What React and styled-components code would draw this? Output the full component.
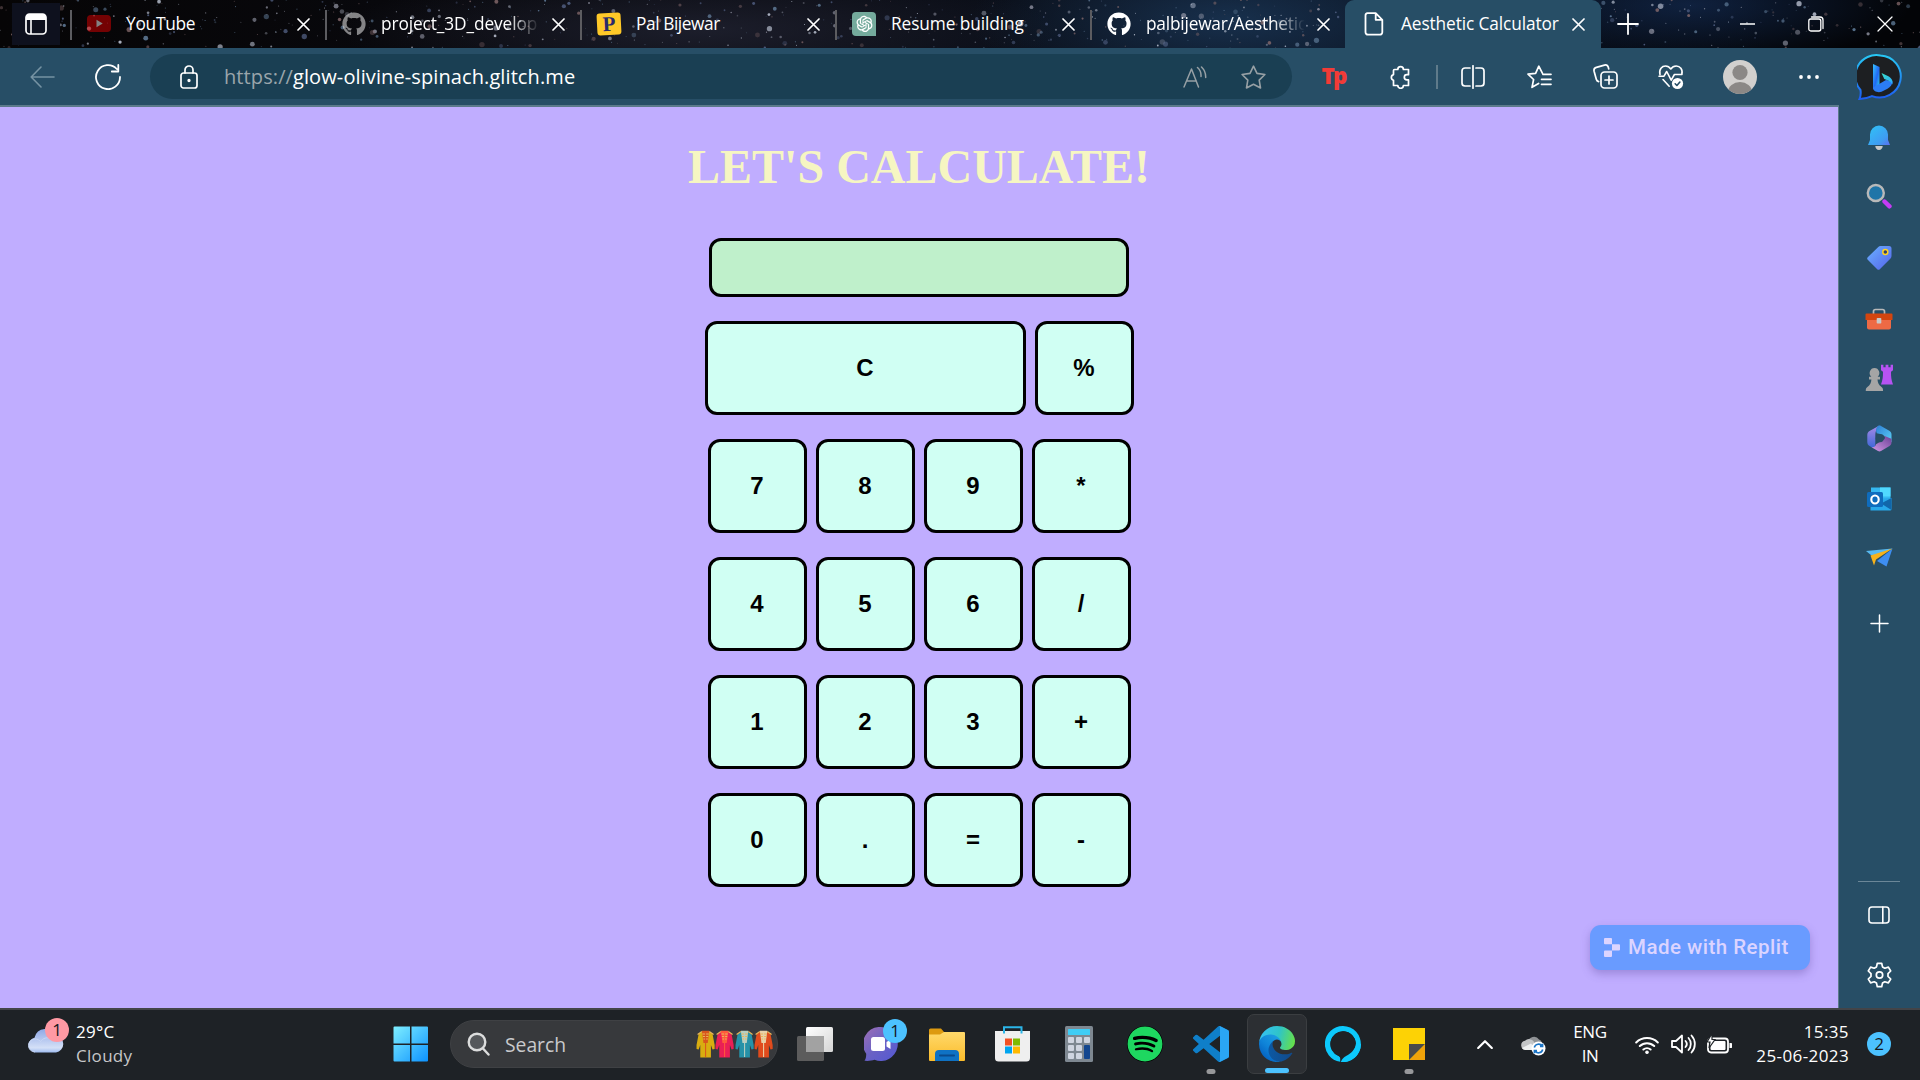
import React from 'react';
import styled, { createGlobalStyle } from 'styled-components';
import { FaGithub, FaSpotify } from 'react-icons/fa';
import { AiOutlineOpenAI } from 'react-icons/ai';

const GlobalStyle = createGlobalStyle`
  * { box-sizing: border-box; }
  html, body { margin: 0; padding: 0; background: #1d2125; }
  body { overflow: hidden; }
  svg { display: block; flex: none; }
`;

const ui = `"Open Sans", "Noto Sans", sans-serif`;

const Desktop = styled.div`
  width: 1920px;
  height: 1080px;
  display: flex;
  flex-direction: column;
  overflow: hidden;
  font-family: ${ui};
  color: #fff;
  white-space: nowrap;
`;

/* ---------- tab strip ---------- */
const TabStrip = styled.header`
  position: relative;
  height: 48px;
  flex: none;
  display: flex;
  background:
    radial-gradient(ellipse 260px 80px at 1230px 20px, rgba(28, 58, 92, 0.75), transparent),
    radial-gradient(ellipse 220px 60px at 1690px 5px, rgba(20, 44, 84, 0.7), transparent),
    radial-gradient(ellipse 360px 60px at 700px 30px, rgba(30, 32, 46, 0.9), transparent),
    linear-gradient(90deg, #060506, #0a0b12 40%, #0a1220 70%, #030407 92%);
`;
const Sky = styled.svg`
  position: absolute;
  inset: 0;
`;
const WorkspaceButton = styled.div`
  position: relative;
  width: 48px;
  height: 42px;
  margin: 3px 10px 0 12px;
  background: #0e111e;
  display: flex;
  align-items: center;
  justify-content: center;
`;
const Tab = styled.div`
  position: relative;
  width: ${(p) => (p.$active ? 256 : 255)}px;
  height: 48px;
  display: flex;
  align-items: center;
  padding: 0 0 1px 17px;
  background: ${(p) => (p.$active ? '#274e66' : 'transparent')};
  border-radius: 9px 9px 0 0;
`;
const Divider = styled.span`
  position: absolute;
  left: 0;
  top: 10px;
  width: 2px;
  height: 30px;
  background: #5c5c60;
`;
const TabIcon = styled.span`
  width: 24px;
  height: 24px;
  margin-right: 15px;
  display: flex;
  align-items: center;
  justify-content: center;
  opacity: ${(p) => (p.$dim ? 0.5 : 1)};
`;
const TabTitle = styled.span`
  width: 162px;
  font-size: 17.3px;
  line-height: 24px;
  letter-spacing: ${(p) => p.$track || 0}px;
  mask-image: ${(p) => (p.$fade ? 'linear-gradient(90deg, #000 78%, transparent 98%)' : 'none')};
`;
const TabClose = styled.span`
  width: 26px;
  margin-left: 2px;
  padding-top: 2px;
  display: flex;
  justify-content: center;
`;
const Slot = styled.span`
  position: relative;
  flex: none;
  width: ${(p) => p.$w}px;
  padding-left: ${(p) => p.$lead || 0}px;
  padding-top: ${(p) => p.$drop || 0}px;
  display: flex;
  align-items: center;
  justify-content: center;
`;
const WindowButtons = styled.div`
  position: relative;
  display: flex;
  padding: 0 0 1px 1px;
`;

/* ---------- toolbar ---------- */
const Toolbar = styled.nav`
  height: 57px;
  flex: none;
  display: flex;
  align-items: center;
  padding: 0 1px 0 9px;
  background: #274e66;
`;
const AddressBar = styled.div`
  width: 1142px;
  height: 45px;
  margin: 0 9px;
  padding: 0 9px 0 30px;
  display: flex;
  align-items: center;
  border-radius: 23px;
  background: #1a3f53;
`;
const Url = styled.span`
  flex: 1;
  margin-left: 26px;
  font-size: 20px;
  line-height: 28px;
  letter-spacing: 0.1px;
  color: #fff;
`;
const Muted = styled.span`
  color: #9aa5ab;
`;
const ToolDivider = styled.span`
  width: 2px;
  height: 24px;
  margin: 0 2px 0 3px;
  background: #5f7b8b;
`;
const TpMark = styled.span`
  font-family: "Open Sans", sans-serif;
  font-weight: 800;
  font-size: 22.5px;
  line-height: 24px;
  letter-spacing: -2px;
  padding-bottom: 2px;
  color: #f23b37;
`;

/* ---------- middle ---------- */
const Middle = styled.div`
  height: 903px;
  flex: none;
  display: flex;
`;
const Page = styled.main`
  position: relative;
  width: 1839px;
  border-top: 2px solid #5c7a8b;
  border-right: 1px solid #5c7a8b;
  background: #c0adff;
  display: flex;
  flex-direction: column;
  align-items: center;
  padding-top: 32px;
`;
const Title = styled.h1`
  margin: 0;
  height: 56px;
  font: bold 48px/56px "Liberation Serif", "Times New Roman", serif;
  color: #f6f6c2;
`;
const Display = styled.div`
  width: 420px;
  height: 59px;
  margin-top: 43px;
  border: 3px solid #000;
  border-radius: 12px;
  background: #bff0cb;
`;
const KeyRow = styled.div`
  display: flex;
  gap: 9px;
  margin-top: 24px;
`;
const Key = styled.button`
  width: ${(p) => (p.$wide ? 321 : 99)}px;
  height: 94px;
  padding: 0 0 1px;
  border: 3px solid #000;
  border-radius: 12px;
  background: #d0fff3;
  color: #000;
  font: bold 24px/28px "Liberation Sans", Arial, sans-serif;
`;
const ReplitBadge = styled.div`
  position: absolute;
  right: 28px;
  bottom: 38px;
  width: 220px;
  height: 45px;
  display: flex;
  align-items: center;
  padding: 0 0 1px 14px;
  gap: 8px;
  border-radius: 11px;
  background: #699bff;
  color: #dcd4ff;
  box-shadow: 0 4px 8px rgba(90, 70, 150, 0.35);
  font: 500 20.5px/24px Roboto, "Open Sans", sans-serif;
  letter-spacing: 0.48px;
`;
const Sidebar = styled.aside`
  width: 81px;
  padding-right: 1px;
  background: #274e66;
  display: flex;
  flex-direction: column;
  align-items: center;
`;
const SideItem = styled.span`
  height: ${(p) => p.$h}px;
  display: flex;
  align-items: center;
  justify-content: center;
`;
const SideRule = styled.span`
  width: 42px;
  height: 1px;
  margin-top: 216px;
  background: #6b8798;
`;

/* ---------- taskbar ---------- */
const Taskbar = styled.footer`
  height: 72px;
  flex: none;
  display: flex;
  align-items: center;
  padding-bottom: 2px;
  border-top: 2px solid #434448;
  background: #1e2226;
`;
const Weather = styled.div`
  width: 378px;
  padding-left: 27px;
  display: flex;
  align-items: center;
  gap: 11px;
`;
const WeatherArt = styled.span`
  position: relative;
  width: 38px;
  height: 52px;
  padding-top: 6px;
`;
const Bubble = styled.span`
  position: absolute;
  right: ${(p) => p.$right}px;
  top: ${(p) => p.$top}px;
  width: 24px;
  height: 24px;
  border-radius: 50%;
  background: ${(p) => p.$bg};
  color: #16181b;
  font-size: 17px;
  line-height: 23px;
  text-align: center;
`;
const Lines = styled.div`
  width: ${(p) => (p.$w ? p.$w + 'px' : 'auto')};
  display: flex;
  flex-direction: column;
  text-align: ${(p) => p.$align || 'left'};
  font-size: 17px;
  line-height: 24px;
  letter-spacing: ${(p) => p.$track || 0}px;
`;
const Soft = styled.span`
  color: #c6c7c9;
`;
const SearchBox = styled.div`
  width: 328px;
  height: 48px;
  margin: 0 4px 0 6px;
  padding: 0 4px 0 16px;
  display: flex;
  align-items: center;
  border: 1px solid #3f4144;
  border-radius: 24px;
  background: #37393c;
`;
const SearchText = styled.span`
  flex: 1;
  margin-left: 15px;
  padding-top: 1px;
  font-size: 19.3px;
  line-height: 26px;
  color: #c9cacc;
`;
const Active = styled.span`
  position: relative;
  width: 60px;
  height: 60px;
  display: flex;
  align-items: center;
  justify-content: center;
  border: 1px solid #3b3e41;
  border-radius: 7px;
  background: #2c2f33;
`;
const Running = styled.i`
  position: absolute;
  left: 50%;
  bottom: ${(p) => (p.$on ? 0 : -12)}px;
  width: ${(p) => (p.$on ? 24 : 9)}px;
  height: 5px;
  transform: translateX(-50%);
  border-radius: 3px;
  background: ${(p) => (p.$on ? '#4cc2ff' : '#97989a')};
`;
const AppSlot = styled(Slot)`
  height: 36px;
`;
const Tray = styled.div`
  margin-left: 35px;
  display: flex;
  align-items: center;
`;
const Count = styled.span`
  width: 24px;
  height: 24px;
  margin-left: 18px;
  border-radius: 50%;
  background: #4cc2ff;
  color: #16181b;
  font-size: 17px;
  line-height: 23px;
  text-align: center;
`;

/* ---------- icon helpers ---------- */
const Line = ({ w = 24, h = w, box = `0 0 ${w} ${h}`, sw = 1.6, color = '#fff', children }) => (
  <svg width={w} height={h} viewBox={box} fill="none" stroke={color} strokeWidth={sw} strokeLinecap="round" strokeLinejoin="round">
    {children}
  </svg>
);
const Cross = ({ s = 13, sw = 1.7 }) => (
  <Line w={s} sw={sw}><path d={`M1 1L${s - 1} ${s - 1}M${s - 1} 1L1 ${s - 1}`} /></Line>
);

const stars = (() => {
  let seed = 20;
  const rnd = () => {
    seed = (seed * 16807) % 2147483647;
    return seed / 2147483647;
  };
  const tints = ['#9a9cab', '#64809e', '#866a6c', '#c4cbdb', '#56658a'];
  return Array.from({ length: 700 }, () => ({
    x: rnd() * 1920,
    y: rnd() * 48,
    r: 0.5 + rnd() ** 4 * 2.3,
    o: 0.3 + rnd() * 0.55,
    c: tints[Math.floor(rnd() * tints.length)],
  }));
})();

const YouTube = () => (
  <svg width="24" height="17" viewBox="0 0 24 17">
    <rect width="24" height="17" rx="4" fill="#e00000" />
    <path d="M9.5 4.8v7.4l6.2-3.7z" fill="#fff" />
  </svg>
);
const PMark = styled.span`
  width: 24px;
  height: 22px;
  border-radius: 3px;
  transform: rotate(-3deg);
  background: #ffc928;
  color: #2b2a6b;
  font: bold 21px/22px "Liberation Serif", serif;
  text-align: center;
`;
const GptMark = styled.span`
  width: 24px;
  height: 24px;
  border-radius: 4px 4px 0 4px;
  background: #74aa9c;
  display: flex;
  align-items: center;
  justify-content: center;
`;
const FileIcon = () => (
  <Line w={20} h={24} sw={1.8}>
    <path d="M3.5 1.2h8.2l6.6 6.6v12.5a2.4 2.4 0 0 1-2.4 2.4H3.9a2.4 2.4 0 0 1-2.4-2.4V3.4a2.2 2.2 0 0 1 2-2.2zM11.7 1.2v6.6h6.6" />
  </Line>
);

const TABS = [
  { title: 'YouTube', icon: <YouTube />, dim: true, track: -0.25 },
  { title: 'project_3D_develop', icon: <FaGithub size={24} />, dim: true, fade: true, track: -0.1 },
  { title: 'Pal Bijewar', icon: <PMark>P</PMark>, track: -0.42 },
  { title: 'Resume building', icon: <GptMark><AiOutlineOpenAI size={21} /></GptMark>, track: -0.1 },
  { title: 'palbijewar/Aesthetic', icon: <FaGithub size={24} />, fade: true, track: -0.2 },
  { title: 'Aesthetic Calculator', icon: <FileIcon />, active: true, track: -0.11 },
];

const Bing = () => (
  <svg width="46" height="48" viewBox="0 0 46 48">
    <defs>
      <linearGradient id="bo" x1="0" y1="0" x2="0" y2="1"><stop offset="0" stopColor="#27c8f5" /><stop offset="1" stopColor="#1d5cf0" /></linearGradient>
      <linearGradient id="bb" x1="0" y1="0" x2="1" y2="1"><stop offset="0" stopColor="#35c3ff" /><stop offset=".55" stopColor="#2268f2" /><stop offset="1" stopColor="#2ad3ee" /></linearGradient>
      <linearGradient id="bc" x1="0" y1="0" x2="1" y2="1"><stop offset="0" stopColor="#38e0c8" /><stop offset="1" stopColor="#2aa8ff" /></linearGradient>
    </defs>
    <path d="M23.500 1.500a21.200 21 0 1 1-8.500 40.600c-3.500 1.600-8 2.900-12.500 2.900 1.200-2.500 1.500-5.500 1-9A21.200 21 0 0 1 23.500 1.500z" fill="#1d1f22" stroke="url(#bo)" strokeWidth="2" />
    <path d="M16 10l6.500 3v18l-6.500 4.500z" fill="url(#bb)" />
    <path d="M16 33.500l13-7.500 6.500 1.500c-.3 3.200-2 5.600-5 7.200l-6 3c-4 1.500-8.500-.6-8.500-4.200z" fill="#2b7cf5" />
    <path d="M24.500 19l6.300 2.900c4 2 5.600 5.400 4.500 8.600-1-2.500-2.600-3.500-4.800-4.300l-3.200-1.300z" fill="url(#bc)" />
  </svg>
);

const Toolbelt = () => (
  <>
    <Slot $w={65}><TpMark>Tp</TpMark></Slot>
    <Slot $w={67} $lead={2}>
      <Line w={24} sw={1.7}><path d="M5.500 4.500h3.300a2.800 2.800 0 0 1 5.600 0h5.100v5.200h-1.600a2.600 2.600 0 0 0 0 5.200h1.600v5.600h-5.100a2.800 2.800 0 0 1-5.600 0H4.500v-5.300a2.900 2.900 0 0 1 0-5.600V5.500a1 1 0 0 1 1-1z" /></Line>
    </Slot>
    <ToolDivider />
    <Slot $w={66}>
      <Line w={24} sw={1.7}><path d="M12 .8v22.400M9 3H4a3 3 0 0 0-3 3v12a3 3 0 0 0 3 3h5M15 3h5a3 3 0 0 1 3 3v12a3 3 0 0 1-3 3h-5" /></Line>
    </Slot>
    <Slot $w={66}>
      <Line w={25} h={24} sw={1.7}><path d="M15.500 8.300L11.800 1.200 8.600 8.300 1 9.200l5.600 5.300L5 22.300l6.600-3.900M15.800 9.300h8.200M14.500 14.300h9.500M14.500 19.300h9.500" /></Line>
    </Slot>
    <Slot $w={66}>
      <Line w={25} sw={1.7}><rect x="8" y="8" width="16" height="16" rx="3.500" /><path d="M16 12v8M12 16h8M5.600 17.600a3.200 3.200 0 0 1-2.300-2.300L1.100 7.200a3.200 3.200 0 0 1 2.300-3.800L11.500 1.100a3.200 3.200 0 0 1 3.800 2.200l.4 1.600" /></Line>
    </Slot>
    <Slot $w={66}>
      <Line w={26} sw={1.6}>
        <path d="M2 10.500C.6 5 4.200 2 7.500 2c2.600 0 4.300 1.500 5.300 3 1-1.500 2.800-3 5.400-3 3.600 0 7 3.300 5.600 8.500M1 12.200h5l2.700-4.700 4.500 8.700 3.200-5.700h7.600M5 15.500l6.200 6.700" />
        <circle cx="19.500" cy="19.500" r="5.600" fill="#fff" stroke="none" /><path d="M17.200 19.800l1.700 1.700 3-3.500" stroke="#274e66" />
      </Line>
    </Slot>
    <Slot $w={72}>
      <svg width="34" height="34" viewBox="0 0 34 34">
        <defs><clipPath id="av"><circle cx="17" cy="17" r="17" /></clipPath></defs>
        <g clipPath="url(#av)"><rect width="34" height="34" fill="#d2d0ce" /><circle cx="17" cy="12.500" r="7.600" fill="#8b8886" /><ellipse cx="17" cy="32" rx="12" ry="10" fill="#8b8886" /></g>
      </svg>
    </Slot>
    <Slot $w={66}>
      <svg width="22" height="6" viewBox="0 0 22 6" fill="#fff"><circle cx="3" cy="3" r="1.900" /><circle cx="11" cy="3" r="1.900" /><circle cx="19" cy="3" r="1.900" /></svg>
    </Slot>
    <Slot $w={76} $drop={2}><Bing /></Slot>
  </>
);

const SideIcons = () => (
  <>
    <SideItem $h={66}>
      <svg width="22" height="26" viewBox="0 0 22 26">
        <defs><linearGradient id="bl" x1="0" y1="0" x2="1" y2="1"><stop offset="0" stopColor="#2fc4f6" /><stop offset=".7" stopColor="#3e9df3" /><stop offset="1" stopColor="#5d6ef0" /></linearGradient></defs>
        <path d="M7.300 21h7.400c0 2-1.500 4-3.700 4s-3.700-2-3.700-4z" fill="#c9c9c9" />
        <path d="M2 9.500a9 9 0 0 1 18 0V15l2 5H0l2-5z" fill="url(#bl)" />
      </svg>
    </SideItem>
    <SideItem $h={50}>
      <svg width="26" height="26" viewBox="0 0 26 26">
        <path d="M18.500 18.500l5 4.800" stroke="#c63bf5" strokeWidth="4.400" strokeLinecap="round" />
        <circle cx="9.800" cy="10" r="8" fill="#1f75a8" stroke="#b9b9b9" strokeWidth="2.400" />
      </svg>
    </SideItem>
    <SideItem $h={72}>
      <svg width="25" height="25" viewBox="0 0 25 25">
        <defs><linearGradient id="tg" x1="0" y1="0" x2="1" y2="1"><stop offset="0" stopColor="#6ab1ff" /><stop offset="1" stopColor="#5563ea" /></linearGradient></defs>
        <path d="M13.500 1H22a2.500 2.500 0 0 1 2.500 2.500V11c0 1-.3 1.700-1 2.400L13 23.900a2 2 0 0 1-3 0L1 15a2 2 0 0 1 0-3L11.300 1.900c.6-.6 1.300-.9 2.200-.9z" fill="url(#tg)" />
        <circle cx="18.300" cy="7" r="2.500" fill="#32406b" stroke="#ffd21f" strokeWidth="1.500" />
      </svg>
    </SideItem>
    <SideItem $h={52}>
      <svg width="28" height="22" viewBox="0 0 28 22">
        <path d="M8.500 6V3.500a2 2 0 0 1 2-2h7a2 2 0 0 1 2 2V6" fill="none" stroke="#b9b9b9" strokeWidth="1.700" />
        <rect x="2" y="8" width="24" height="13.500" rx="2" fill="#ee6a45" />
        <path d="M.5 6.500a1 1 0 0 1 1-1h25a1 1 0 0 1 1 1V12h-27z" fill="#d3450f" />
        <rect x="11.700" y="10" width="4.600" height="5.600" rx=".8" fill="#c9c9c9" />
      </svg>
    </SideItem>
    <SideItem $h={66}>
      <svg width="28" height="28" viewBox="0 0 28 28">
        <path d="M16 .8h2.400v2.500h2.200V.8h2.800v2.500h2.200V.8H28v5.400l-2 1.600c0 5 .3 8 2 12.700H16c1.700-4.700 2-7.700 2-12.700l-2-1.600z" fill="#b653f2" />
        <path d="M9.500 4a5 5 0 0 1 3.200 8.700H15v2.800h-2.500c.2 3.500 1.300 5.500 4 7.500 1.200.8 1.700 2 1.500 4H.8c-.2-2 .4-3.200 1.600-4 2.700-2 3.800-4 4-7.500H4v-2.800h2.300A5 5 0 0 1 9.500 4z" fill="#a5a5a5" />
      </svg>
    </SideItem>
    <SideItem $h={54}>
      <svg width="25" height="27" viewBox="0 0 25 27">
        <defs>
          <linearGradient id="m1" x1="0" y1="0" x2="1" y2="1"><stop offset="0" stopColor="#2d7fd6" /><stop offset="1" stopColor="#5cd0f5" /></linearGradient>
          <linearGradient id="m2" x1="0" y1="0" x2="0" y2="1"><stop offset="0" stopColor="#a98ae6" /><stop offset="1" stopColor="#3f67d8" /></linearGradient>
          <linearGradient id="m3" x1="0" y1="1" x2="1" y2="0"><stop offset="0" stopColor="#d49be6" /><stop offset="1" stopColor="#6a3f96" /></linearGradient>
        </defs>
        <path d="M12.500.5L2.500 6C1 7 .3 8.200.3 10v7c0 2 .8 3 2.200 4l3 1.700c1.500.5 2.800-.2 2.800-2V10c0-3 1-6.500 4.200-9.500z" fill="url(#m2)" />
        <path d="M11 1c1-.6 2-.6 3 0l8.300 4.800c1.400.8 2.200 2 2.200 3.700v7.800L15.500 9.500 9.700 8.300C8.500 5 9 2.500 11 1z" fill="url(#m1)" />
        <path d="M24.500 15v2.500c0 1.600-.7 2.700-2 3.500L14 26c-1 .6-2 .6-3 0l-6.500-3.800c2.500.3 4-.7 4.500-3l8-4.700c1.300-1 1.300-2.500 0-3.800l5.500 2.300c1.300.4 2 1 2 2z" fill="url(#m3)" />
        <circle cx="12.800" cy="13.200" r="4" fill="#274e66" />
      </svg>
    </SideItem>
    <SideItem $h={68}>
      <svg width="25" height="24" viewBox="0 0 25 24">
        <path d="M4 .5h19.500v12H4z" fill="#35b8f1" /><path d="M13 .5h10.500v9H13z" fill="#50d9ff" />
        <path d="M3.500 12l21-1v11a1.500 1.500 0 0 1-1.500 1.500H3.500z" fill="#28a8ea" /><path d="M24.500 11v12L14 16.500z" fill="#1166aa" />
        <rect x="0" y="5" width="16" height="15" rx="1.500" fill="#0f6cbd" />
        <ellipse cx="8" cy="12.500" rx="3.700" ry="4" fill="none" stroke="#fff" strokeWidth="2.100" />
      </svg>
    </SideItem>
    <SideItem $h={48}>
      <svg width="27" height="19" viewBox="0 0 27 19">
        <path d="M0 3L26.500.5 8 9.500z" fill="#58b9f0" /><path d="M26.500.5L20.500 18.500 11 13z" fill="#3e8ef2" />
        <path d="M4.500 7.500L26.500.5 10 11.500 8 17.500z" fill="#f6b21b" />
      </svg>
    </SideItem>
    <SideItem $h={84}>
      <Line w={19} sw={1.500}><path d="M9.500 1v17M1 9.500h17" /></Line>
    </SideItem>
    <SideRule />
    <SideItem $h={66}>
      <Line w={22} h={18} sw={1.600}><rect x="1" y="1" width="20" height="16" rx="3" /><path d="M14.800 1v16" /></Line>
    </SideItem>
    <SideItem $h={54}>
      <Line w={25} h={26} sw={1.700}>
        <circle cx="12.500" cy="13" r="3.200" />
        <path d="M10.300 1.300h4.400l.8 3.600 2.300 1.300 3.600-1.100 2.300 3.900-2.700 2.600v2.800l2.700 2.600-2.300 3.900-3.600-1.100-2.300 1.300-.8 3.600h-4.400l-.8-3.600-2.300-1.300-3.600 1.100L1.300 17l2.700-2.600v-2.800L1.300 9l2.300-3.900 3.600 1.100 2.300-1.300z" />
      </Line>
    </SideItem>
  </>
);

const Coat = ({ c, trim }) => (
  <svg width="19.2" height="28" viewBox="0 0 18 28" preserveAspectRatio="none">
    <path d="M5 2L2.500 4 .5 15v4l2 .5L4 15v12.500h10V15l1.500 4.500 2-.5v-4L15.500 4 13 2z" fill={c} />
    <path d="M5.500.8h7L11 13H7z" fill={trim} />
    <path d="M1.500 4.500l4-3M16.500 4.500l-4-3M6 4h6M6.500 6.500h5M7 9h4" stroke="#e9b65a" strokeWidth="1.100" />
    <path d="M9 3v24" stroke={trim} strokeWidth="1" />
  </svg>
);
const Coats = () => (
  <Slot $w={77}>
    <Coat c="#d9ad10" trim="#d9571c" /><Coat c="#ea1f55" trim="#ff5a3c" /><Coat c="#2592a8" trim="#b9cfc0" /><Coat c="#e04b1c" trim="#e8d2a8" />
  </Slot>
);

const Start = () => (
  <svg width="36" height="36" viewBox="0 0 36 36">
    <defs><linearGradient id="st" gradientUnits="userSpaceOnUse" x1="0" y1="0" x2="36" y2="36"><stop offset="0" stopColor="#80f0ff" /><stop offset="1" stopColor="#0a90ff" /></linearGradient></defs>
    <path fill="url(#st)" d="M1.500.5H17v17H.5v-16a1 1 0 0 1 1-1zM18.500.5H34a1 1 0 0 1 1 1v16H18.500zM.5 19H17v16.500H1.500a1 1 0 0 1-1-1zM18.500 19H35v15.500a1 1 0 0 1-1 1H18.500z" />
  </svg>
);
const TaskView = () => (
  <svg width="36" height="34" viewBox="0 0 36 34">
    <defs><linearGradient id="tv" x1="0" y1="0" x2="1" y2="1"><stop offset="0" stopColor="#fff" /><stop offset="1" stopColor="#d5d5d5" /></linearGradient></defs>
    <rect x="9" y="0" width="27" height="25" rx="1.500" fill="url(#tv)" />
    <rect x="0" y="9" width="27" height="25" rx="1.500" fill="#5c5c5c" />
    <path d="M9 9h18v16H9z" fill="#a2a2a2" />
  </svg>
);
const Chat = () => (
  <svg width="34" height="34" viewBox="0 0 34 34">
    <defs><linearGradient id="ch" x1="0" y1="0" x2="1" y2="1"><stop offset="0" stopColor="#a06fb4" /><stop offset=".5" stopColor="#6a62c4" /><stop offset="1" stopColor="#5358d4" /></linearGradient></defs>
    <path d="M17 0a17 17 0 1 1-6.500 32.800C8 33.700 4 34.200.5 33.800c1.300-2 1.800-4.300 1.700-7A17 17 0 0 1 17 0z" fill="url(#ch)" />
    <rect x="7" y="10" width="14" height="14" rx="2.500" fill="#fff" /><path d="M22.500 15l4-2.500v9.500l-4-2.500z" fill="#fff" />
  </svg>
);
const Folder = () => (
  <svg width="36" height="33" viewBox="0 0 36 33">
    <defs><linearGradient id="fo" x1="0" y1="0" x2="0" y2="1"><stop offset="0" stopColor="#ffd96b" /><stop offset="1" stopColor="#fbbc2b" /></linearGradient></defs>
    <path d="M0 2a1.500 1.500 0 0 1 1.500-1.500H12L15 4h20v6H0z" fill="#dd9a10" />
    <path d="M0 6.500h11l4-2.500h20a1 1 0 0 1 1 1v27a1 1 0 0 1-1 1H1a1 1 0 0 1-1-1z" fill="url(#fo)" />
    <path d="M6 33v-7a4 4 0 0 1 4-4h16a4 4 0 0 1 4 4v7z" fill="#0f72c4" /><path d="M11 27.500h14" stroke="#0a4a8c" strokeWidth="2" strokeLinecap="round" />
  </svg>
);
const Store = () => (
  <svg width="36" height="36" viewBox="0 0 36 36">
    <path d="M0 5h35v27a3.500 3.500 0 0 1-3.500 3.500h-28A3.500 3.500 0 0 1 0 32z" fill="#efefef" />
    <path d="M9 7.500V1.200h17.500v6.300" fill="none" stroke="#2bb5e8" strokeWidth="2" />
    <path d="M10 12.500h7v7h-7z" fill="#f25022" /><path d="M18 12.500h7v7h-7z" fill="#7fba00" /><path d="M10 20.500h7v7h-7z" fill="#00a4ef" /><path d="M18 20.500h7v7h-7z" fill="#ffb900" />
  </svg>
);
const Calc = () => (
  <svg width="28" height="36" viewBox="0 0 28 36">
    <rect width="28" height="36" rx="1.500" fill="#7e8891" /><rect x="3" y="3" width="22" height="6" rx=".5" fill="#3fcdf5" />
    {[3, 11, 19].map((x) => [11, 19, 27].map((y) => (x === 19 && y > 11 ? null : <rect key={x + '-' + y} x={x} y={y} width="6" height="6" rx="1" fill="#cfd5e0" />)))}
    <rect x="19" y="19" width="6" height="14" rx="1" fill="#14478f" />
  </svg>
);
const SpotDisc = styled.span`
  width: 36px;
  height: 36px;
  border-radius: 50%;
  overflow: hidden;
  background: #000;
  color: #1ed760;
`;
const Code = () => (
  <svg width="36" height="36" viewBox="0 0 24 24">
    <path fill="#0f7fc9" d="M23.150 2.587L18.210.21a1.494 1.494 0 0 0-1.705.29l-9.460 8.630-4.120-3.128a.999.999 0 0 0-1.276.057L.327 7.261A1 1 0 0 0 .326 8.740L3.899 12 .326 15.260a1 1 0 0 0 .001 1.479L1.650 17.940a.999.999 0 0 0 1.276.057l4.120-3.128 9.460 8.630a1.492 1.492 0 0 0 1.704.29l4.942-2.377A1.500 1.500 0 0 0 24 20.060V3.939a1.500 1.500 0 0 0-.850-1.352zm-5.146 14.861L10.826 12l7.178-5.448v10.896z" />
    <path fill="#2aa6f4" d="M17.200.2c.4-.1.700-.1 1 0l4.950 2.400c.5.2.85.8.85 1.350v16.100c0 .6-.35 1.100-.85 1.350L18.200 23.800c-.3.100-.6.100-1 0 .5-.1.800-.6.800-1.200V1.400c0-.6-.3-1.100-.8-1.200z" />
  </svg>
);
const Edge = () => (
  <svg width="36" height="36" viewBox="0 0 256 256">
    <defs>
      <linearGradient id="e1" gradientUnits="userSpaceOnUse" x1="63" y1="177" x2="241" y2="177"><stop offset="0" stopColor="#0c59a4" /><stop offset="1" stopColor="#114a8b" /></linearGradient>
      <linearGradient id="e2" gradientUnits="userSpaceOnUse" x1="157" y1="100" x2="46" y2="221"><stop offset="0" stopColor="#1b9de2" /><stop offset=".6" stopColor="#0f83d8" /><stop offset="1" stopColor="#0667c4" /></linearGradient>
      <linearGradient id="e3" gradientUnits="userSpaceOnUse" x1="20" y1="60" x2="255" y2="120"><stop offset="0" stopColor="#35c1f1" /><stop offset=".5" stopColor="#2fc4c8" /><stop offset="1" stopColor="#66e04a" /></linearGradient>
    </defs>
    <g transform="translate(-4.630 -4.920)">
      <path fill="url(#e1)" d="M235.680 195.460a93.730 93.730 0 0 1-10.540 4.710 101.870 101.870 0 0 1-35.900 6.460c-47.320 0-88.540-32.550-88.540-74.320A31.480 31.480 0 0 1 117.130 105c-42.800 1.800-53.800 46.400-53.800 72.530 0 73.880 68.090 81.370 82.760 81.370 7.910 0 19.840-2.300 27-4.560l1.310-.440A128.340 128.340 0 0 0 241 201.100a4 4 0 0 0-5.320-5.640Z" />
      <path fill="url(#e2)" d="M110.340 246.340A79.200 79.200 0 0 1 87.600 225a80.720 80.720 0 0 1 29.530-120c3.120-1.470 8.450-4.130 15.540-4a32.350 32.350 0 0 1 25.690 13 31.880 31.880 0 0 1 6.360 18.660c0-.210 24.460-79.600-80-79.600-43.900 0-80 41.660-80 78.210a130.150 130.150 0 0 0 12.110 56 128 128 0 0 0 156.380 67.110 75.550 75.550 0 0 1-62.780-8Z" />
      <path fill="url(#e3)" d="M156.940 153.780c-.810 1.050-3.300 2.500-3.300 5.660 0 2.610 1.700 5.120 4.720 7.230 14.380 10 41.490 8.680 41.560 8.680a59.560 59.560 0 0 0 30.270-8.350A61.380 61.380 0 0 0 260.630 114c.260-22.410-8-37.310-11.340-43.910C228.090 28.760 182.350 5 132.630 5a128 128 0 0 0-128 126.200c.480-36.540 36.800-66.050 80-66.050 3.500 0 23.460.340 42 10.070 16.340 8.580 24.900 18.940 30.850 29.210 6.180 10.670 7.280 24.150 7.280 29.520s-2.740 13.330-7.820 19.830Z" />
    </g>
  </svg>
);
const Alexa = () => (
  <svg width="36" height="36" viewBox="0 0 36 36">
    <path fillRule="evenodd" fill="#0cc9fc" d="M18 0a18 18 0 1 1-2.800 35.800v-3.500c0-1.200-.7-2-1.800-2.400A12.800 12.800 0 1 1 30.800 17c.1 6-4.300 13-15 18.800a18 18 0 0 1-.6 0A18 18 0 0 1 18 0z" />
    <path fill="#1e2226" d="M18 5.200a12.800 12.800 0 0 1 12.800 12.700C30.500 24 25 29.500 16.500 33l-1.300-1.500c-.3-.9-.9-1.400-1.800-1.700A12.800 12.800 0 0 1 18 5.200z" />
    <path fill="#0cc9fc" d="M31 17.500c-.5 5.500-4.500 9.700-9.500 12.300-3 1.600-4.800 3.500-5.500 6.100A18 18 0 0 0 36 18z" />
  </svg>
);
const Sticky = () => (
  <svg width="32" height="32" viewBox="0 0 32 32">
    <path d="M0 0h32v32H0z" fill="#fdd205" /><path d="M16 32L32 16v16z" fill="#f0a30a" /><path d="M16 16h16L16 32z" fill="#4a4a4a" />
  </svg>
);
const OneDrive = () => (
  <svg width="26" height="22" viewBox="0 0 26 22">
    <path d="M8 8a6 6 0 0 1 11-2.500 5 5 0 0 1 3 5L12 14z" fill="#8f9295" />
    <path d="M5.500 16a4.700 4.700 0 0 1-.5-9.300 6 6 0 0 1 9 1l4 8.300z" fill="#c3c5c7" /><path d="M2 14l9-4.500L17 16H5.500A4.500 4.500 0 0 1 2 14z" fill="#eef0f1" />
    <circle cx="18.500" cy="14.500" r="7" fill="#fff" />
    <path d="M14.300 13.500a4.400 4.400 0 0 1 8-1.300M22.700 15.500a4.400 4.400 0 0 1-8 1.300M22.600 9.800v2.600h-2.600M14.400 19.200v-2.600H17" fill="none" stroke="#1b74c5" strokeWidth="1.600" />
  </svg>
);

const APPS = [
  <TaskView />,
  <><Chat /><Bubble $right={7} $top={-7} $bg="#4cc2ff">1</Bubble></>,
  <Folder />,
  <Store />,
  <Calc />,
  <SpotDisc><FaSpotify size={36} /></SpotDisc>,
  <><Code /><Running /></>,
  <Active><Edge /><Running $on /></Active>,
  <Alexa />,
  <><Sticky /><Running /></>,
];

const KEYS = [
  ['C', '%'],
  ['7', '8', '9', '*'],
  ['4', '5', '6', '/'],
  ['1', '2', '3', '+'],
  ['0', '.', '=', '-'],
];

export default function App() {
  return (
    <Desktop>
      <GlobalStyle />
      <TabStrip>
        <Sky width="1920" height="48">
          {stars.map((s, i) => <circle key={i} cx={s.x} cy={s.y} r={s.r} fill={s.c} opacity={s.o} />)}
        </Sky>
        <WorkspaceButton>
          <svg width="22" height="22" viewBox="0 0 22 22">
            <rect x="1" y="1" width="20" height="20" rx="3.500" fill="none" stroke="#fff" strokeWidth="1.700" />
            <path d="M1 4.500A3.500 3.500 0 0 1 4.500 1h13A3.500 3.500 0 0 1 21 4.500V7H1z" fill="#fff" /><path d="M6 7v14" stroke="#fff" strokeWidth="1.600" />
          </svg>
        </WorkspaceButton>
        {TABS.map((t) => (
          <Tab key={t.title} $active={t.active}>
            {!t.active && <Divider />}
            <TabIcon $dim={t.dim}>{t.icon}</TabIcon>
            <TabTitle $fade={t.fade} $track={t.track}>{t.title}</TabTitle>
            <TabClose><Cross /></TabClose>
          </Tab>
        ))}
        <WindowButtons>
          <Slot $w={52}><Line w={22} sw={1.800}><path d="M11 1v20M1 11h20" /></Line></Slot>
          <Slot $w={58} />
          <Slot $w={70}><Line w={15} h={2} sw={1.500}><path d="M0 1h15" /></Line></Slot>
          <Slot $w={68}><Line w={16} sw={1.300}><rect x=".8" y="3" width="12" height="12" rx="2" /><path d="M3.500 1h8.500a3 3 0 0 1 3 3v8.500" /></Line></Slot>
          <Slot $w={70}><Cross s={16} sw={1.300} /></Slot>
        </WindowButtons>
      </TabStrip>

      <Toolbar>
        <Slot $w={66}><Line w={25} h={22} sw={1.600} color="#7693a3"><path d="M24 11H1.200M11 1L1.200 11 11 21" /></Line></Slot>
        <Slot $w={66}><Line w={26} sw={1.800}><path d="M25 13A12 12 0 1 1 21.800 5M23.300 1v6.500h-6.500" /></Line></Slot>
        <AddressBar>
          <Line w={18} h={24} sw={1.700}><rect x="1" y="8" width="16" height="15" rx="2.500" /><path d="M5 8V5a4 4 0 0 1 8 0v3" /><circle cx="9" cy="15.500" r=".8" fill="#fff" /></Line>
          <Url><Muted>https://</Muted>glow-olivine-spinach.glitch.me</Url>
          <Slot $w={57}><Line w={24} h={22} sw={1.500} color="#97a0a5"><path d="M1 21L8.500 3 15.500 21M3.500 15h9.800M14.500 1.500a11 11 0 0 1 3.500 9M18.500 1a14 14 0 0 1 4.200 10.500" /></Line></Slot>
          <Slot $w={60}><Line w={25} h={24} sw={1.600} color="#97a0a5"><path d="M12.500 1.200l3.500 7.200 7.900 1.100-5.700 5.600 1.300 7.900-7-3.700-7 3.700 1.300-7.900L1.100 9.500 9 8.400z" /></Line></Slot>
        </AddressBar>
        <Toolbelt />
      </Toolbar>

      <Middle>
        <Page>
          <Title>LET'S CALCULATE!</Title>
          <Display />
          {KEYS.map((row) => (
            <KeyRow key={row[0]}>
              {row.map((k) => <Key key={k} $wide={k === 'C'}>{k}</Key>)}
            </KeyRow>
          ))}
          <ReplitBadge>
            <svg width="16" height="19" viewBox="0 0 16 19" fill="#dcd4ff"><path d="M1 0h6a1 1 0 0 1 1 1v5.300H1a1 1 0 0 1-1-1V1a1 1 0 0 1 1-1zM8 6.300h7a1 1 0 0 1 1 1v4.300a1 1 0 0 1-1 1H8zM1 12.600h7V18a1 1 0 0 1-1 1H1a1 1 0 0 1-1-1v-4.400a1 1 0 0 1 1-1z" /></svg>
            Made with Replit
          </ReplitBadge>
        </Page>
        <Sidebar><SideIcons /></Sidebar>
      </Middle>

      <Taskbar>
        <Weather>
          <WeatherArt>
            <svg width="37" height="29" viewBox="0 0 37 29">
              <defs><linearGradient id="cl" x1="0" y1="0" x2="0" y2="1"><stop offset="0" stopColor="#8fa8e6" /><stop offset=".8" stopColor="#d4e0f7" /><stop offset="1" stopColor="#9fbcf0" /></linearGradient></defs>
              <path d="M8 28.500a7.500 7.500 0 0 1-.5-14.800A11.500 11.500 0 0 1 29 11.500a8.600 8.600 0 0 1 0 17z" fill="url(#cl)" />
              <path d="M8 28a6.500 6.500 0 0 1 0-13c3 0 4 1 5.500 2.500C16 14 20 13 23 14.500" fill="none" stroke="#c9d8f6" strokeWidth="1" />
            </svg>
            <Bubble $right={-4} $top={0} $bg="#ff99a4">1</Bubble>
          </WeatherArt>
          <Lines $track={0.3}><span>29°C</span><Soft>Cloudy</Soft></Lines>
        </Weather>
        <Slot $w={66}><Start /></Slot>
        <SearchBox>
          <Line w={23} h={24} sw={2.400} color="#dcdddd"><circle cx="10" cy="10" r="8.300" fill="#55585b" /><path d="M16 16.500l5.500 6" /></Line>
          <SearchText>Search</SearchText>
          <Coats />
        </SearchBox>
        {APPS.map((app, i) => <AppSlot key={i} $w={66}>{app}</AppSlot>)}
        <Tray>
          <Line w={16} h={9} sw={2.200}><path d="M1.200 8L8 1.200 14.800 8" /></Line>
          <Slot $w={80} $drop={2}><OneDrive /></Slot>
          <Lines $align="center" $w={34} $track={-0.4}><span>ENG</span><span>IN</span></Lines>
          <Slot $w={64} $lead={16}>
            <Line w={24} h={19} sw={2}><path d="M1.200 7.500a15.500 15.500 0 0 1 21.600 0M4.800 11a10.500 10.500 0 0 1 14.400 0M8.400 14.500a5.500 5.500 0 0 1 7.200 0" /><circle cx="12" cy="17.200" r="1.200" fill="#fff" stroke="#fff" strokeWidth="1.200" /></Line>
          </Slot>
          <Line w={25} h={20} sw={1.800}><path d="M1 7h4l6-5.500v17L5 13H1zM14.500 7a4.500 4.500 0 0 1 0 6M17.500 4a9 9 0 0 1 0 12M20.500 1.500a12.500 12.500 0 0 1 0 17" /></Line>
          <Slot $w={47}>
            <svg width="25" height="20" viewBox="0 0 25 20">
              <rect x="1" y="4.500" width="20" height="14" rx="3" fill="none" stroke="#fff" strokeWidth="1.800" /><rect x="3.500" y="7" width="15" height="9" rx="1" fill="#fff" />
              <path d="M22.500 9h1a1.500 1.500 0 0 1 0 5h-1z" fill="#fff" /><path d="M5-.5L0 8h3l-1 6 6-8.500H5z" fill="#fff" stroke="#1e2226" strokeWidth="1.200" />
            </svg>
          </Slot>
          <Lines $align="right" $w={106} $track={0.4}><span>15:35</span><span>25-06-2023</span></Lines>
          <Count>2</Count>
        </Tray>
      </Taskbar>
    </Desktop>
  );
}
